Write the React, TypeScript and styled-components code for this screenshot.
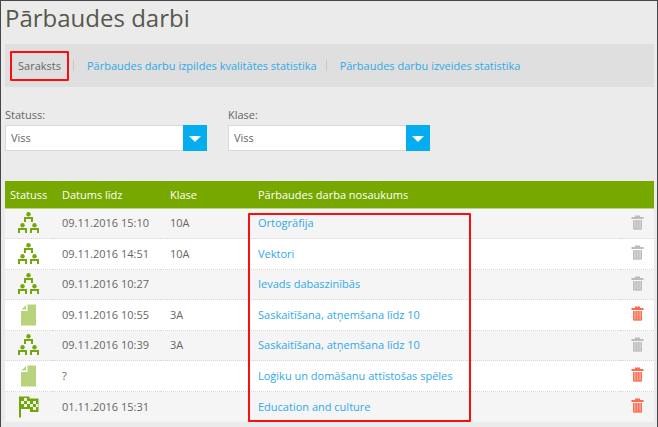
import React from "react";
import styled, { createGlobalStyle, css } from "styled-components";

const GlobalStyle = createGlobalStyle`
  * { box-sizing: border-box; }
  body {
    margin: 0;
    background: #ebebeb;
    color: #666;
    font-family: "Open Sans", sans-serif;
    font-size: 11px;
    line-height: 16px;
  }
`;

const Page = styled.main`
  min-height: 100vh;
  padding: 0 3px 5px 4px;
  border: 1px solid #48464a;
`;

const Title = styled.h1`
  margin: 0;
  padding-bottom: 9px;
  color: #56584b;
  font-size: 24px;
  font-weight: 400;
  line-height: 34px;
`;

const Nav = styled.nav`
  display: flex;
  align-items: center;
  height: 43px;
  padding-left: 5px;
  background: #dfdfdf;
`;

const NavLink = styled.a<{ $current?: boolean }>`
  color: #2fa9e8;
  text-decoration: none;
  ${(p) =>
    p.$current &&
    css`
      padding: 5px 6px;
      border: 2px solid #fb0d12;
      border-radius: 1px;
      color: #666;
    `}
`;

const Divider = styled.span<{ $wide?: boolean }>`
  width: 1px;
  height: 11px;
  margin-right: 13px;
  margin-left: ${(p) => (p.$wide ? 9 : 4)}px;
  background: #c9c9bd;
`;

const Filters = styled.form`
  display: flex;
  gap: 21px;
  padding: 20px 0 30px;
`;

const Field = styled.div`
  display: flex;
  flex-direction: column;
  gap: 2px;
  flex: 0 1 202px;
`;

const SelectBox = styled.div`
  display: grid;
  grid-template-columns: 1fr 24px;
  height: 26px;
`;

const Select = styled.select`
  grid-area: 1 / 1 / 2 / 3;
  appearance: none;
  width: 100%;
  padding: 0 30px 0 5px;
  border: 1px solid #d9d9d9;
  border-radius: 0;
  background: #fff;
  color: #666;
  font: inherit;
`;

const Arrow = styled.span`
  grid-area: 1 / 2;
  display: flex;
  align-items: center;
  justify-content: center;
  padding-top: 2px;
  background: #03adef;
  pointer-events: none;
  z-index: 1;
`;

const TableArea = styled.section`
  position: relative;
`;

const Highlight = styled.div`
  position: absolute;
  top: 32px;
  bottom: 0;
  left: 243px;
  width: 223px;
  border: 2px solid #fb0d12;
  border-radius: 1px;
  pointer-events: none;
`;

const Table = styled.table`
  width: 100%;
  border-collapse: separate;
  border-spacing: 0;
  table-layout: fixed;
`;

const Column = styled.col<{ $width?: number }>`
  width: ${(p) => (p.$width ? `${p.$width}px` : "auto")};
`;

const Head = styled.th`
  height: 28px;
  padding: 0 0 0 10px;
  border-bottom: 1px solid #b9d68a;
  background: #76a800;
  color: #fff;
  font-weight: 400;
  text-align: left;
  white-space: nowrap;
  &:first-child { padding-left: 5px; }
`;

const Cell = styled.td`
  padding: 0 0 1px 10px;
  border-bottom: 1px dotted #d8d8d8;
  white-space: nowrap;
  &:first-child { padding-left: 13px; }
  &:last-child { padding-left: 11px; }
  svg { display: block; }
`;

const Row = styled.tr<{ $shaded: boolean }>`
  height: 30px;
  background: ${(p) => (p.$shaded ? "#f5f5f5" : "#fff")};
  &:nth-child(even) { height: 31px; }
  &:last-child > td { border-bottom: 0; }
`;

const TestLink = styled.a`
  color: #2fa9e8;
  text-decoration: none;
`;

const DeleteButton = styled.button<{ $enabled: boolean }>`
  display: block;
  padding: 0;
  border: 0;
  background: none;
  color: ${(p) => (p.$enabled ? "#fb6b50" : "#bcbcbc")};
  cursor: ${(p) => (p.$enabled ? "pointer" : "default")};
`;

const Person = ({ x, y }: { x: number; y: number }) => (
  <g transform={`translate(${x} ${y})`}>
    <circle cx="4.5" cy="2.2" r="2.2" fill="#72a80c" />
    <path d="M1 10V5.9H8V10" fill="none" stroke="#72a80c" strokeWidth="2" />
  </g>
);

const GroupIcon = () => (
  <svg width="22" height="22" viewBox="0 0 22 22" role="img" aria-label="Grupa">
    <Person x={6} y={0} />
    <Person x={0} y={11} />
    <Person x={12} y={11} />
  </svg>
);

const PageIcon = () => (
  <svg width="22" height="22" viewBox="0 0 22 22" role="img" aria-label="Melnraksts">
    <path d="M9.5 0.5H18V21.5H3V7H9.5Z" fill="#b9d37d" />
    <path d="M8 1V5.5H3.5Z" fill="#b9d37d" />
  </svg>
);

const FlagIcon = () => (
  <svg width="22" height="22" viewBox="0 0 22 22" role="img" aria-label="Pabeigts">
    <path d="M1 0.5H11.5V2.5H20.5V16H12V13H3V21.5H1Z" fill="#72a510" />
    <path
      d="M3 5H6V8H3ZM6 2H9V5H6ZM9 5H12V8H9ZM6 8H9V11H6ZM12 8H15V11H12ZM15 5H18V8H15ZM15 11H18V14H15ZM18 8H20V11H18Z"
      fill="#edf3df"
    />
  </svg>
);

const TrashIcon = () => (
  <svg width="13" height="17" viewBox="0 0 13 17" aria-hidden="true">
    <path d="M4 0.5H9V2H12.5V4H0.5V2H4Z" fill="currentColor" />
    <path d="M2 5H11V14.5H2Z" fill="currentColor" fillOpacity="0.65" />
    <path d="M2.5 5V14H10.5V5M5.2 5V14M7.8 5V14" fill="none" stroke="currentColor" />
  </svg>
);

const icons = { group: GroupIcon, page: PageIcon, flag: FlagIcon };

interface Test {
  icon: keyof typeof icons;
  date: string;
  grade: string;
  name: string;
  deletable: boolean;
}

const tests: Test[] = [
  { icon: "group", date: "09.11.2016 15:10", grade: "10A", name: "Ortogrāfija", deletable: false },
  { icon: "group", date: "09.11.2016 14:51", grade: "10A", name: "Vektori", deletable: false },
  { icon: "group", date: "09.11.2016 10:27", grade: "", name: "Ievads dabaszinībās", deletable: false },
  { icon: "page", date: "09.11.2016 10:55", grade: "3A", name: "Saskaitīšana, atņemšana līdz 10", deletable: true },
  { icon: "group", date: "09.11.2016 10:39", grade: "3A", name: "Saskaitīšana, atņemšana līdz 10", deletable: false },
  { icon: "page", date: "?", grade: "", name: "Loģiku un domāšanu attīstošas spēles", deletable: true },
  { icon: "flag", date: "01.11.2016 15:31", grade: "", name: "Education and culture", deletable: true },
];

const Filter = ({ id, label }: { id: string; label: string }) => (
  <Field>
    <label htmlFor={id}>{label}</label>
    <SelectBox>
      <Select id={id} defaultValue="all">
        <option value="all">Viss</option>
      </Select>
      <Arrow>
        <svg width="12" height="6" viewBox="0 0 12 6" aria-hidden="true">
          <path d="M0 0H12L6 6Z" fill="#fff" />
        </svg>
      </Arrow>
    </SelectBox>
  </Field>
);

export default function App() {
  return (
    <Page>
      <GlobalStyle />
      <Title>Pārbaudes darbi</Title>
      <Nav>
        <NavLink href="#list" $current aria-current="page">Saraksts</NavLink>
        <Divider />
        <NavLink href="#quality">Pārbaudes darbu izpildes kvalitātes statistika</NavLink>
        <Divider $wide />
        <NavLink href="#created">Pārbaudes darbu izveides statistika</NavLink>
      </Nav>
      <Filters>
        <Filter id="status" label="Statuss:" />
        <Filter id="grade" label="Klase:" />
      </Filters>
      <TableArea>
        <Table>
          <colgroup>
            <Column $width={47} />
            <Column $width={108} />
            <Column $width={88} />
            <Column />
            <Column $width={34} />
          </colgroup>
          <thead>
            <tr>
              <Head scope="col">Statuss</Head>
              <Head scope="col">Datums līdz</Head>
              <Head scope="col">Klase</Head>
              <Head scope="col">Pārbaudes darba nosaukums</Head>
              <Head />
            </tr>
          </thead>
          <tbody>
            {tests.map((test, index) => {
              const Icon = icons[test.icon];
              return (
                <Row key={test.date} $shaded={index % 2 === 0}>
                  <Cell><Icon /></Cell>
                  <Cell>{test.date}</Cell>
                  <Cell>{test.grade}</Cell>
                  <Cell><TestLink href="#test">{test.name}</TestLink></Cell>
                  <Cell>
                    <DeleteButton type="button" aria-label="Dzēst" $enabled={test.deletable} disabled={!test.deletable}>
                      <TrashIcon />
                    </DeleteButton>
                  </Cell>
                </Row>
              );
            })}
          </tbody>
        </Table>
        <Highlight />
      </TableArea>
    </Page>
  );
}
